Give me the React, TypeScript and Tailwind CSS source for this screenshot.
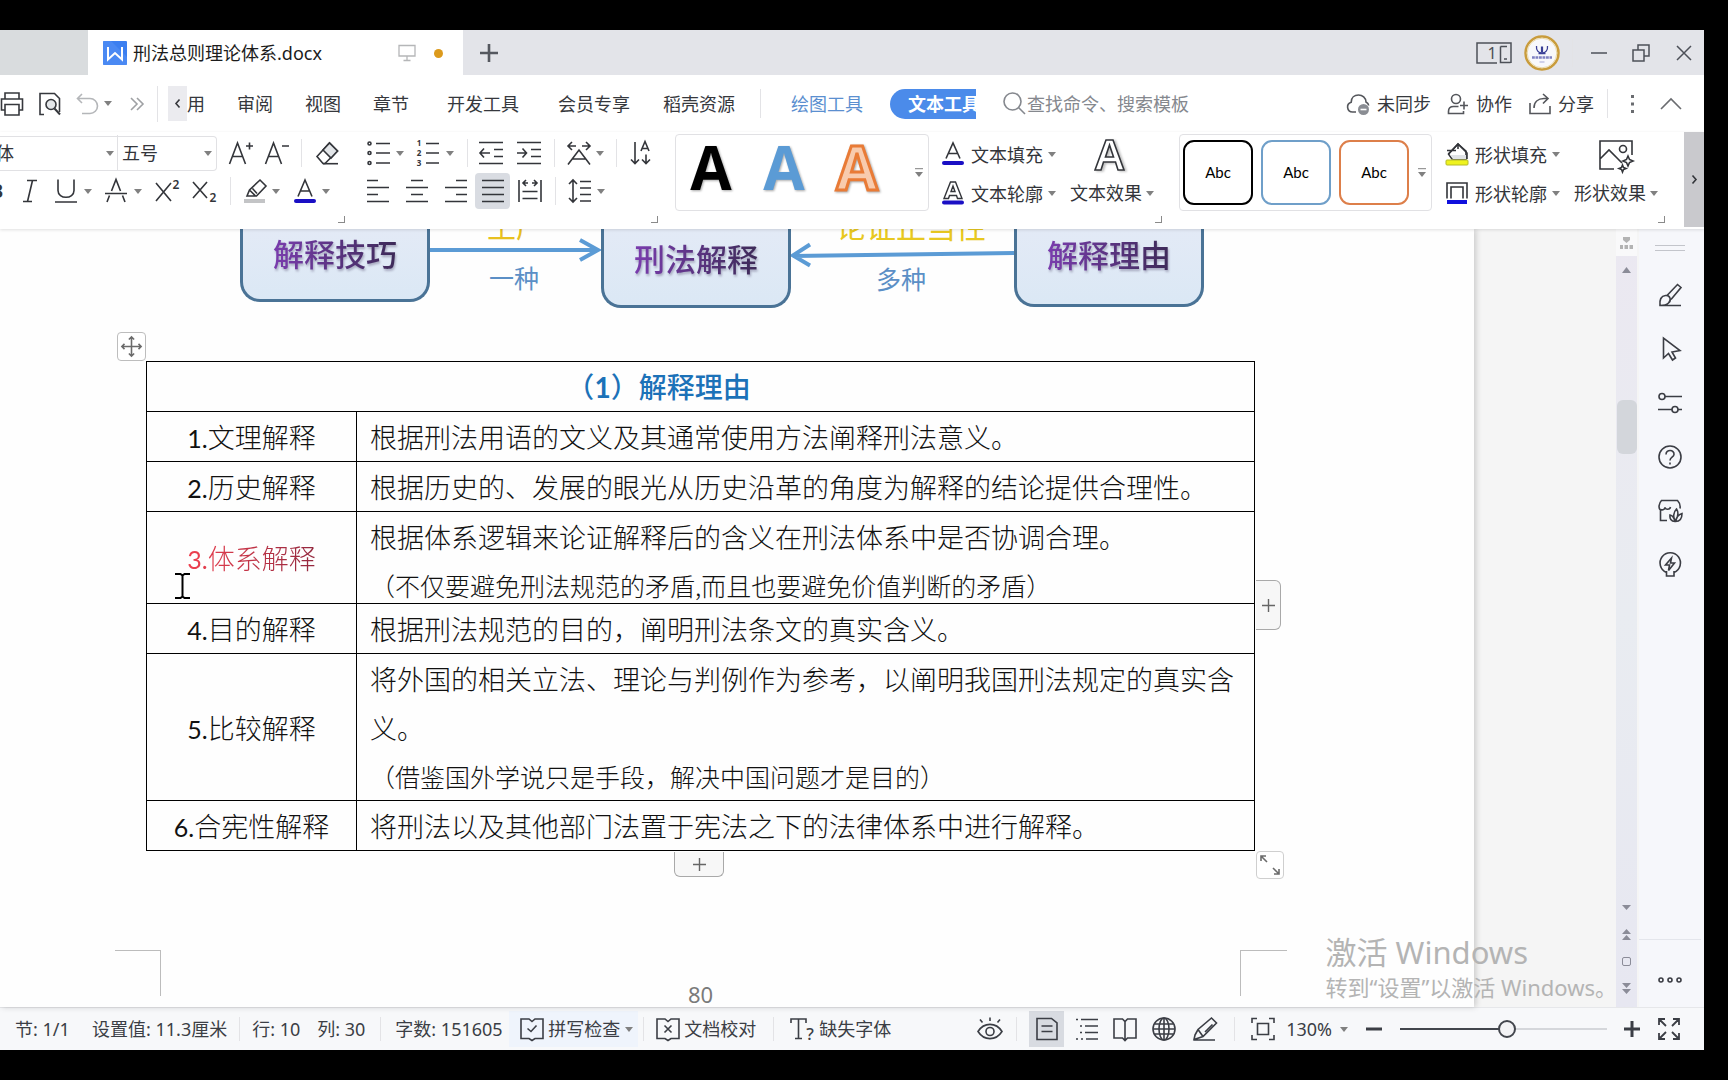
import React from "react";

type Kids = { children: React.ReactNode };

const UI = "font-['Noto_Sans','Noto_Sans_CJK_SC',sans-serif]";

function Ico({ children, className = "size-6", sw = 1.6, box = "0 0 24 24" }: Kids & { className?: string; sw?: number; box?: string }) {
  return (
    <svg viewBox={box} className={`${className} shrink-0 overflow-visible`} fill="none" stroke="currentColor" strokeWidth={sw} aria-hidden="true">
      {children}
    </svg>
  );
}

function Btn({ label, className = "", children }: Kids & { label: string; className?: string }) {
  return (
    <button type="button" aria-label={label} className={`flex shrink-0 items-center justify-center ${className}`}>
      {children}
    </button>
  );
}

function Caret({ className = "w-[18px]" }: { className?: string }) {
  return (
    <span className={`flex shrink-0 justify-center ${className}`}>
      <svg viewBox="0 0 8 5" className="h-[5px] w-2" aria-hidden="true">
        <path d="M0 0h8L4 5z" fill="#808080" />
      </svg>
    </span>
  );
}

function Sep({ className = "w-[18px]", h = "h-7" }: { className?: string; h?: string }) {
  return (
    <span className={`flex shrink-0 justify-center ${className}`}>
      <span className={`w-px bg-[#e3e3e6] ${h}`} />
    </span>
  );
}

function Corner({ className }: { className: string }) {
  return <span className={`absolute bottom-[6px] size-[7px] border-r border-b border-[#8a8a8a] ${className}`} />;
}

function Letter({ x, y, size, weight = 400, children }: { x: number; y: number; size: number; weight?: number; children: string }) {
  return (
    <text x={x} y={y} fontSize={size} fontWeight={weight} textAnchor="middle" stroke="none" fill="currentColor" fontFamily="Noto Sans, sans-serif">
      {children}
    </text>
  );
}

/* ---------------------------------------------------------------- title bar */

function TitleBar() {
  return (
    <header className="flex h-[45px] shrink-0 bg-[#e3e4e9] text-[#4d5058]">
      <div className="w-[88px] shrink-0 bg-[#d9dcde]" />
      <div className="flex w-[375px] shrink-0 items-center bg-white pt-px pl-[15px]">
        <svg viewBox="0 0 24 24" className="size-6 shrink-0" aria-hidden="true">
          <rect width="24" height="24" rx="1" fill="#3c7ff0" />
          <path d="M0 0h8L24 16v8H0z" fill="#5692f5" opacity=".55" />
          <path d="M5 6v12.500L12 12l7 6.500V6" fill="none" stroke="#fff" strokeWidth="2" />
        </svg>
        <span className="ml-[6px] text-lg text-[#1c1c1c]">刑法总则理论体系.docx</span>
        <Ico className="ml-auto size-[18px] text-[#b5b6b8]" box="0 0 18 18" sw={1.3}>
          <path d="M1 1.500h16v10.500H1zM9 12v4M5.500 16.500h7" />
        </Ico>
        <span className="mr-5 ml-[18px] size-[9px] rounded-full bg-[#dc9a1c]" />
      </div>
      <Btn label="新建" className="w-[52px]">
        <Ico className="size-[18px] text-[#55585f]" box="0 0 18 18" sw={2.6}>
          <path d="M9 0v18M0 9h18" />
        </Ico>
      </Btn>
      <div className="ml-auto flex items-center">
        <Btn label="窗口布局" className="w-9">
          <Ico className="h-[22px] w-9" box="0 0 36 22" sw={1.5}>
            <path d="M21 21H1V1h34v20M24.500 4.500V20.500h10" />
            <path d="M24.500 4.500H31M28 17h3" />
            <Letter x={16} y={17} size={16}>1</Letter>
          </Ico>
        </Btn>
        <Btn label="账户" className="ml-3 size-9">
          <svg viewBox="0 0 36 36" className="size-9" aria-hidden="true">
            <circle cx="18" cy="18" r="16.500" fill="#f8f8fb" stroke="#c99c3c" strokeWidth="2.500" />
            <circle cx="18" cy="18" r="14.800" fill="none" stroke="#ead9a8" strokeWidth="1" />
            <path d="M12.500 11c-.5 4.500 2 7 5.500 7s6-2.500 5.500-7M14.500 18.500h7" fill="none" stroke="#3a3f96" strokeWidth="1.300" />
            <path d="M18 11.500v6" stroke="#3a3f96" strokeWidth="2.200" />
            <path d="M8 22.500h20" stroke="#7f81c2" strokeWidth="2.500" strokeDasharray="2.800 .7" />
            <path d="M15.500 27h5" stroke="#b8badf" strokeWidth="1.300" />
          </svg>
        </Btn>
        <Sep className="w-6" />
        <Btn label="最小化" className="w-[29px]">
          <Ico className="size-4" box="0 0 16 16" sw={1.5}><path d="M0 8h16" /></Ico>
        </Btn>
        <Btn label="还原" className="ml-[11px] w-[34px]">
          <Ico className="size-[18px]" box="0 0 18 18" sw={1.5}>
            <path d="M1 6h11v11H1zM6 6V1h11v11h-5" />
          </Ico>
        </Btn>
        <Btn label="关闭" className="mr-[3px] ml-[9px] w-[34px]">
          <Ico className="size-4" box="0 0 16 16" sw={1.5}><path d="M1 1l14 14M15 1L1 15" /></Ico>
        </Btn>
      </div>
    </header>
  );
}

/* ----------------------------------------------------------------- menu bar */

const TABS = [
  { name: "审阅", w: "w-[68px]" },
  { name: "视图", w: "w-[68px]" },
  { name: "章节", w: "w-[68px]" },
  { name: "开发工具", w: "w-[116px]" },
  { name: "会员专享", w: "w-[106px]" },
  { name: "稻壳资源", w: "w-[104px]" },
];

function MenuBar() {
  return (
    <nav className="flex h-[57px] shrink-0 items-center bg-white text-lg text-[#36383d]">
      <Btn label="打印" className="w-6">
        <Ico>
          <path d="M5 7V1h14v6M5 18H1.500V7h21v11H19M5 12.500h14V23H5z" />
        </Ico>
      </Btn>
      <Btn label="打印预览" className="ml-[14px] w-6">
        <Ico>
          <path d="M6 22.500H2v-21h14.500l5 5V20" />
          <circle cx="13" cy="12.500" r="5" fill="#e4e7ea" />
          <path d="M16.500 16.500L22 22.500" strokeWidth="2" />
        </Ico>
      </Btn>
      <Btn label="撤销" className="ml-[13px] w-6 text-[#b4b6b9]">
        <Ico className="h-6 w-[22px]" box="0 0 22 24">
          <path d="M6 2L1.500 6.500L6 11M1.500 6.500H14a7.500 7.500 0 010 15H6" />
        </Ico>
      </Btn>
      <Caret />
      <Btn label="更多" className="ml-2 w-6 text-[#9fa1a4]">
        <Ico className="size-[14px]" box="0 0 14 14"><path d="M1 1l6 6-6 6M7 1l6 6-6 6" /></Ico>
      </Btn>
      <Sep className="w-[16px]" h="h-9" />
      <Btn label="向左滚动" className="ml-[3px] h-[35px] w-[19px] bg-[#ebebef]">
        <Ico className="h-[9px] w-[5px]" box="0 0 5 9"><path d="M4.500 .5L1 4.500l3.500 4" /></Ico>
      </Btn>
      <button type="button" className="mr-[16px] shrink-0">用</button>
      {TABS.map((t) => (
        <button key={t.name} type="button" className={`shrink-0 ${t.w}`}>{t.name}</button>
      ))}
      <Sep className="w-[18px]" h="h-[29px]" />
      <button type="button" className="ml-[22px] shrink-0 text-[#5b8fd0]">绘图工具</button>
      <div className="ml-[27px] h-[30px] w-[86px] shrink-0 overflow-hidden">
        <button type="button" className="h-[30px] w-[108px] rounded-full bg-[#4b8bea] font-bold text-white">文本工具</button>
      </div>
      <label className="ml-[27px] flex items-center text-[#85888e]">
        <Ico className="size-[23px]" box="0 0 23 23">
          <circle cx="9.500" cy="9.500" r="8.500" />
          <path d="M15.500 15.500L22 22" />
        </Ico>
        <input aria-label="搜索" placeholder="查找命令、搜索模板" className="ml-px w-[190px] bg-transparent outline-none placeholder:text-[#85888e]" />
      </label>
      <div className="ml-auto flex shrink-0 items-center">
        <button type="button" className="flex items-center gap-[7px]">
          <Ico className="size-6 text-[#54565b]">
            <path d="M10 20H6.500a5 5 0 01-1.300-9.800C5.200 5.500 8.500 3 12.500 3s7.300 2.800 7.500 7c1.500.8 2.500 2 2.700 3.500" />
            <circle cx="17.500" cy="17.500" r="5.500" fill="#8a8d93" stroke="none" />
            <path d="M14.500 17.500h6" stroke="#fff" />
          </Ico>
          未同步
        </button>
        <button type="button" className="ml-[16px] flex items-center gap-[7px]">
          <Ico className="h-6 w-[22px] text-[#54565b]" box="0 0 22 24">
            <circle cx="9" cy="7" r="4.500" />
            <path d="M16.500 19v2.500H1.500v-2c0-3 2-5 5-5h5M17 9.500v8M13 13.500h8" />
          </Ico>
          协作
        </button>
        <button type="button" className="ml-[17px] flex items-center gap-[7px]">
          <Ico className="size-[22px] text-[#54565b]" box="0 0 22 22">
            <path d="M1 10v10.500h20V13M5 15c0-6 4-9.500 10-9.500h4M14 1l5 4.500-5 5" />
          </Ico>
          分享
        </button>
        <Sep className="ml-[3px] w-5" h="h-[29px]" />
        <Btn label="更多选项" className="ml-[5px] w-[22px]">
          <svg viewBox="0 0 4 18" className="h-[18px] w-1" aria-hidden="true">
            <path d="M0 0h3v3H0zM0 7.500h3v3H0zM0 15h3v3H0z" fill="#6a6c70" />
          </svg>
        </Btn>
        <Btn label="收起功能区" className="mr-[22px] ml-4 w-[22px]">
          <Ico className="h-3 w-[22px] text-[#6a6c70]" box="0 0 22 12"><path d="M1 11L11 1l10 10" /></Ico>
        </Btn>
      </div>
    </nav>
  );
}

/* ------------------------------------------------------------------- ribbon */

function FontGroup() {
  return (
    <section className="relative h-full w-[352px] shrink-0 pt-[2px]">
      <div className="flex h-[38px] items-center">
        <div className="flex h-[35px] w-[217px] shrink-0 items-center rounded-r-sm border-y border-r border-[#e1e1e4]">
          <div className="flex w-[118px] shrink-0 items-center overflow-hidden border-r border-[#e1e1e4] py-1">
            <select aria-label="字体" className="-ml-[22px] w-[124px] shrink-0 appearance-none text-lg">
              <option>宋体</option>
            </select>
            <Caret className="w-4" />
          </div>
          <select aria-label="字号" className="ml-1 w-[78px] shrink-0 appearance-none text-lg">
            <option>五号</option>
          </select>
          <Caret className="w-4" />
        </div>
        <Btn label="增大字号" className="ml-[11px] w-[26px]">
          <Ico className="h-6 w-[26px]" box="0 0 26 24">
            <path d="M1.500 23L9.500 2l8 21M4.500 15.500h10M18 5h7M21.500 1.500v7" />
          </Ico>
        </Btn>
        <Btn label="减小字号" className="ml-[10px] w-[26px]">
          <Ico className="h-6 w-[26px]" box="0 0 26 24">
            <path d="M1.500 23L9.500 2l8 21M4.500 15.500h10M18 5h7" />
          </Ico>
        </Btn>
        <Sep className="w-[22px]" />
        <Btn label="清除格式" className="w-[30px]">
          <Ico>
            <path d="M2 15.500L14.500 2l8 8L10 22.500H8z" />
            <path d="M8 9l8 8 6.500-7-8-8z" fill="#e3e6e9" />
            <path d="M8 22.700h15" />
          </Ico>
        </Btn>
      </div>
      <div className="flex h-[38px] items-center">
        <div className="w-[3px] shrink-0 overflow-hidden">
          <button type="button" aria-label="加粗" className="-ml-[10px] text-xl font-bold">B</button>
        </div>
        <Btn label="倾斜" className="ml-[15px] w-6">
          <Ico><path d="M9 1.500h10M5 22.500h9M14.500 1.500l-5 21" /></Ico>
        </Btn>
        <Btn label="下划线" className="ml-3 w-6">
          <Ico><path d="M4 .5v11c0 9 16 9 16 0V.5M1 23h22" /></Ico>
        </Btn>
        <Caret className="w-5" />
        <Btn label="删除线" className="ml-[6px] w-6">
          <Ico><path d="M7.500 12L12 .500l4.500 11.500M1 14.500h22M5.500 16.500L3 23M18.500 16.500L21 23" /></Ico>
        </Btn>
        <Caret className="w-5" />
        <Btn label="上标" className="ml-[7px] w-[26px]">
          <Ico className="h-6 w-[26px]" box="0 0 26 24">
            <path d="M1 4l15 18M16 4L1 22" />
            <Letter x={21} y={10} size={12} weight={600}>2</Letter>
          </Ico>
        </Btn>
        <Btn label="下标" className="ml-[11px] w-[26px]">
          <Ico className="h-6 w-[26px]" box="0 0 26 24">
            <path d="M1 3l14 16M15 3L1 19" />
            <Letter x={21} y={23} size={12} weight={600}>2</Letter>
          </Ico>
        </Btn>
        <Sep className="w-6" />
        <Btn label="突出显示" className="w-[26px]">
          <Ico className="h-6 w-[26px]" box="0 0 26 24">
            <path d="M5 17l2.500-6L18 1l6 6-9.500 10zM7.500 11l6 6M10.500 9.500l4.500 5" />
            <path d="M2 22h21" stroke="#c3c4c6" strokeWidth="4" />
          </Ico>
        </Btn>
        <Caret className="w-[16px]" />
        <Btn label="字体颜色" className="ml-[10px] w-[22px]">
          <Ico className="h-6 w-[22px]" box="0 0 22 24">
            <path d="M4 17.500L11 1l7 16.500M6.500 12h9" />
            <path d="M2 22h18" stroke="#1a0fc4" strokeWidth="4" strokeLinecap="round" />
          </Ico>
        </Btn>
        <Caret className="w-5" />
      </div>
      <Corner className="right-[7px]" />
    </section>
  );
}

function ParagraphGroup() {
  return (
    <section className="relative h-full w-[323px] shrink-0 pt-[2px]">
      <div className="flex h-[38px] items-center">
        <Btn label="项目符号" className="ml-[15px] w-6">
          <Ico>
            <path d="M9 2.500h14M9 12h14M9 22h14" />
            <circle cx="2.500" cy="2.500" r="1.500" /><circle cx="2.500" cy="12" r="1.500" /><circle cx="2.500" cy="22" r="1.500" />
          </Ico>
        </Btn>
        <Caret />
        <Btn label="编号" className="ml-[7px] w-6">
          <Ico>
            <path d="M10 2.500h13M10 12h13M10 22h13" />
            <Letter x={3} y={5} size={8} weight={700}>1</Letter>
            <Letter x={3} y={15} size={8} weight={700}>2</Letter>
            <Letter x={3} y={25} size={8} weight={700}>3</Letter>
          </Ico>
        </Btn>
        <Caret className="w-5" />
        <Sep className="w-[14px]" />
        <Btn label="减少缩进" className="ml-[5px] w-6">
          <Ico><path d="M0 1.500h24M0 22.500h24M15 8.500h9M15 15.500h9M11 12H1.500M5 7.500L1 12l4 4.500" /></Ico>
        </Btn>
        <Btn label="增加缩进" className="ml-[14px] w-6">
          <Ico><path d="M0 1.500h24M0 22.500h24M14 8.500h10M14 15.500h10M0 12h9M5.500 7.500l4 4.500-4 4.500" /></Ico>
        </Btn>
        <Sep className="w-[26px]" />
        <Btn label="文字方向" className="w-6">
          <Ico><path d="M1 5h8M5 1L1 5l4 4M15 5h8M19 1l4 4-4 4M1 23.500L12 9l11 14.500M5.500 18h13" /></Ico>
        </Btn>
        <Caret />
        <Sep className="w-[14px]" />
        <Btn label="排序" className="ml-[6px] w-6">
          <Ico>
            <path d="M6 1v21.500M2 18.500l4 4 4-4M12 10l4-9.500 4 9.500M13.500 7.500h5M17 13.500v9M13 18.500l4 4 4-4" />
          </Ico>
        </Btn>
      </div>
      <div className="flex h-[38px] items-center">
        <Btn label="左对齐" className="ml-[14px] w-6">
          <Ico><path d="M1 1.500h11M1 8.500h22M1 15.500h11M1 22.500h22" /></Ico>
        </Btn>
        <Btn label="居中对齐" className="ml-[15px] w-6">
          <Ico><path d="M6 1.500h12M1 8.500h22M6 15.500h12M1 22.500h22" /></Ico>
        </Btn>
        <Btn label="右对齐" className="ml-[15px] w-6">
          <Ico><path d="M12 1.500h11M1 8.500h22M12 15.500h11M1 22.500h22" /></Ico>
        </Btn>
        <Btn label="两端对齐" className="ml-[7px] h-9 w-[35px] rounded-sm bg-[#d9dce2]">
          <Ico><path d="M1 1.500h22M1 8.500h22M1 15.500h22M1 22.500h22" /></Ico>
        </Btn>
        <Btn label="分散对齐" className="ml-[8px] w-6">
          <Ico><path d="M1 1v22M23 1v22M5 4h5M8 1L5 4l3 3M14 4h5M16 1l3 3-3 3M4.500 12.500h15M4.500 19.500h15" /></Ico>
        </Btn>
        <Sep className="w-[26px]" />
        <Btn label="行距" className="w-6">
          <Ico><path d="M5 1v22M1 5l4-4 4 4M1 19l4 4 4-4M12 2.500h11M12 9h11M12 15.500h11M12 22h11" /></Ico>
        </Btn>
        <Caret />
      </div>
      <Corner className="right-[17px]" />
    </section>
  );
}

function MoreCaret() {
  return (
    <svg viewBox="0 0 8 9" className="h-[9px] w-2" aria-hidden="true">
      <path d="M0 4h8L4 9z" fill="#808080" />
      <path d="M0 .7h8" stroke="#808080" />
    </svg>
  );
}

function WordArtGallery() {
  const art = [
    { fill: "#000000", stroke: "none" },
    { fill: "#5b9bd5", stroke: "none" },
    { fill: "#f8cbad", stroke: "#e97b36" },
  ];
  return (
    <section className="mt-[2px] flex h-[77px] w-[254px] shrink-0 items-center rounded-sm border border-[#e1e1e4]">
      {art.map((a, i) => (
        <button key={a.fill} type="button" aria-label={`艺术字样式 ${i + 1}`} className="h-full w-[73px] shrink-0">
          <svg viewBox="0 0 73 75" className="size-full drop-shadow-[1px_1px_1px_rgba(0,0,0,0.35)]" aria-hidden="true">
            <text x="35" y="55" fontSize="60" fontWeight="700" textAnchor="middle" fill={a.fill} stroke={a.stroke} strokeWidth="3" fontFamily="Open Sans, sans-serif">A</text>
          </svg>
        </button>
      ))}
      <Btn label="更多艺术字" className="ml-[16px] w-4"><MoreCaret /></Btn>
    </section>
  );
}

function TextGroup() {
  return (
    <section className="relative flex h-full w-[250px] shrink-0 pt-[3px] text-lg">
      <div className="ml-[13px] flex w-[120px] shrink-0 flex-col">
        <button type="button" className="flex h-[39px] items-center">
          <Ico className="h-6 w-[22px]" box="0 0 22 24">
            <path d="M4 15.500L11 0l7 15.500M6.500 10.500h9" />
            <path d="M2 20h18" stroke="#1a0fc4" strokeWidth="4" strokeLinecap="round" />
          </Ico>
          <span className="ml-[7px] shrink-0">文本填充</span>
          <Caret />
        </button>
        <button type="button" className="flex h-[39px] items-center">
          <Ico className="h-6 w-[22px]" box="0 0 22 24" sw={1.4}>
            <path d="M2 16.500L8.500 0h5L20 16.500h-4.500l-1-3h-7l-1 3zM9 9.500h4L11 4z" />
            <path d="M2 20.500h18" stroke="#1a0fc4" strokeWidth="4" strokeLinecap="round" />
          </Ico>
          <span className="ml-[7px] shrink-0">文本轮廓</span>
          <Caret />
        </button>
      </div>
      <button type="button" className="ml-[8px] flex h-[77px] w-[92px] shrink-0 flex-col justify-between">
        <Ico className="mt-[3px] ml-[23px] h-[34px] w-[34px] drop-shadow-[2px_1px_1px_rgba(0,0,0,0.25)]" box="0 0 34 34">
          <path d="M2 32L13 2h7l11 30h-6l-2.500-8h-12L8 32zM12.500 19h8L16.500 7z" fill="#fff" />
        </Ico>
        <span className="flex h-[38px] items-center"><span className="shrink-0">文本效果</span><Caret className="w-[16px]" /></span>
      </button>
      <Corner className="right-[17px]" />
    </section>
  );
}

function ShapeGallery() {
  const shapes = [
    { key: "black", c: "border-black" },
    { key: "blue", c: "border-[#6f9fc9]" },
    { key: "orange", c: "border-[#dd7f4a]" },
  ];
  return (
    <section className="mt-[2px] flex h-[77px] w-[253px] shrink-0 items-center gap-2 rounded-sm border border-[#e1e1e4] pl-[3px]">
      {shapes.map((s) => (
        <button key={s.key} type="button" className={`h-[65px] w-[70px] shrink-0 rounded-[11px] border-2 bg-white font-['Lato',sans-serif] text-[15px] text-black ${s.c}`}>Abc</button>
      ))}
      <Btn label="更多形状样式" className="-ml-[3px] w-4"><MoreCaret /></Btn>
    </section>
  );
}

function ShapeGroup() {
  return (
    <section className="relative flex h-full min-w-[252px] flex-1 pt-[3px] text-lg">
      <div className="ml-[13px] flex w-[121px] shrink-0 flex-col">
        <button type="button" className="flex h-[39px] items-center">
          <Ico>
            <path d="M3.500 11L13 1l8 7v8H7z" fill="#fff" />
            <path d="M5 12h16v4H8z" fill="#e0e3e6" stroke="none" />
            <path d="M2 7.500h9M13 1v5M3.500 11L13 1l9 9v6" />
            <rect x="1" y="17" width="22" height="5" rx="1" fill="#eff31e" stroke="#b5ba28" strokeWidth="1" />
          </Ico>
          <span className="ml-[6px] shrink-0">形状填充</span>
          <Caret />
        </button>
        <button type="button" className="flex h-[39px] items-center">
          <Ico>
            <path d="M2 16.500V1h20v15.500M6 16.500V5h12v11.500" />
            <path d="M2 20h20" stroke="#1010dd" strokeWidth="4" />
          </Ico>
          <span className="ml-[6px] shrink-0">形状轮廓</span>
          <Caret />
        </button>
      </div>
      <button type="button" className="ml-[8px] flex h-[77px] w-[92px] shrink-0 flex-col justify-between">
        <Ico className="mt-[4px] ml-[24px] h-[34px] w-[36px]" box="0 0 36 34">
          <path d="M16 30H2V2h32v14M2 20l9-9 13 13" />
          <circle cx="25" cy="10" r="3.500" />
          <path d="M30 17l1.500 3.500L35 22l-3.500 1.500L30 27l-1.500-3.500L25 22l3.500-1.500zM24.500 26l1 2.500 2.500 1-2.500 1-1 2.500-1-2.500-2.500-1 2.500-1z" />
        </Ico>
        <span className="flex h-[38px] items-center"><span className="shrink-0">形状效果</span><Caret className="w-[16px]" /></span>
      </button>
      <Corner className="right-[19px]" />
    </section>
  );
}

function Ribbon() {
  return (
    <div className="relative z-10 flex h-[97px] shrink-0 bg-white text-[#33353a] shadow-[0_1px_3px_rgba(0,0,0,0.12)]">
      <FontGroup />
      <ParagraphGroup />
      <WordArtGallery />
      <TextGroup />
      <ShapeGallery />
      <ShapeGroup />
      <Btn label="向右滚动" className="h-[95px] w-5 bg-[#c9c9cd]">
        <Ico className="h-[9px] w-[5px]" box="0 0 5 9"><path d="M.5 .5L4 4.500l-3.500 4" /></Ico>
      </Btn>
    </div>
  );
}

/* ----------------------------------------------------------------- document */

const NODES = [
  { text: "解释技巧", pos: "left-[240px] h-[73px] pb-[26px]" },
  { text: "刑法解释", pos: "left-[601px] h-[79px] pb-[27px]" },
  { text: "解释理由", pos: "left-[1014px] h-[78px] pb-[30px]" },
];

function Diagram() {
  return (
    <div className="relative h-[132px] font-['Noto_Sans_CJK_SC',sans-serif]">
      <svg className="absolute top-0 left-0 h-[90px] w-[1240px]" viewBox="0 0 1240 90" fill="none" stroke="#5b9bd5" strokeWidth="4" aria-hidden="true">
        <path d="M429 21H598M580 11l18 10-18 10M1014 24L793 27M810 15.500L793 26.500l17 10" />
      </svg>
      {NODES.map((n) => (
        <div key={n.text} className={`absolute top-0 flex w-[190px] items-end justify-center rounded-b-[20px] border-[3px] border-t-0 border-[#4a7396] bg-linear-to-b from-[#e3eaf6] to-[#dbe8f5] ${n.pos}`}>
          <span className="bg-linear-to-r from-[#7a3cae] to-[#3d2a58] bg-clip-text text-[31px] leading-[40px] font-medium text-transparent drop-shadow-[1px_2px_1px_rgba(60,50,90,0.35)]">{n.text}</span>
        </div>
      ))}
      <span className="absolute -top-[24px] left-[487px] text-[29px] leading-[40px] text-[#e8c020]">生产</span>
      <span className="absolute -top-[24px] left-[836px] text-[30px] leading-[40px] text-[#e8c820]">论证正当性</span>
      <span className="absolute top-[30px] left-[489px] text-[25px] leading-[36px] text-[#5b8fc6]">一种</span>
      <span className="absolute top-[31px] left-[876px] text-[25px] leading-[36px] text-[#5b8fc6]">多种</span>
    </div>
  );
}

type Row = { no: string; name: string; body: string; note?: string; noteStyle?: string; red?: boolean };

const ROWS: Row[] = [
  { no: "1.", name: "文理解释", body: "根据刑法用语的文义及其通常使用方法阐释刑法意义。" },
  { no: "2.", name: "历史解释", body: "根据历史的、发展的眼光从历史沿革的角度为解释的结论提供合理性。" },
  { no: "3.", name: "体系解释", body: "根据体系逻辑来论证解释后的含义在刑法体系中是否协调合理。", note: "（不仅要避免刑法规范的矛盾,而且也要避免价值判断的矛盾）", noteStyle: "-mb-[7px]", red: true },
  { no: "4.", name: "目的解释", body: "根据刑法规范的目的，阐明刑法条文的真实含义。" },
  { no: "5.", name: "比较解释", body: "将外国的相关立法、理论与判例作为参考，以阐明我国刑法规定的真实含义。", note: "（借鉴国外学说只是手段，解决中国问题才是目的）", noteStyle: "-mb-px" },
  { no: "6.", name: "合宪性解释", body: "将刑法以及其他部门法置于宪法之下的法律体系中进行解释。" },
];

function ReasonTable() {
  return (
    <div className="relative mr-[219px] ml-[146px]">
      <table className="w-full table-fixed border-collapse font-['Noto_Sans_CJK_SC',sans-serif] text-[27px] leading-[49px] font-light text-[#111]">
        <colgroup>
          <col className="w-[210px]" />
          <col />
        </colgroup>
        <thead>
          <tr>
            <th colSpan={2} className="border border-black pr-[84px] text-[28px] font-medium text-[#1c72b8]">
              （<b className="font-['Lato',sans-serif] text-[28px] leading-none">1</b>）解释理由
            </th>
          </tr>
        </thead>
        <tbody>
          {ROWS.map((r) => (
            <tr key={r.no}>
              <th scope="row" className="border border-black font-light">
                <span className={r.red ? "bg-linear-to-r from-[#f0404f] to-[#93283e] bg-clip-text text-transparent" : ""}>
                  <span className="font-['Lato',sans-serif] text-[25px] leading-none font-normal">{r.no}</span>
                  {r.name}
                </span>
              </th>
              <td className="border border-black pl-[13px]">
                <p>{r.body}</p>
                {r.note && <p className={`text-[25px] ${r.noteStyle ?? ""}`}>{r.note}</p>}
              </td>
            </tr>
          ))}
        </tbody>
      </table>
      <Btn label="移动表格" className="absolute -top-[29px] -left-[29px] size-[29px] rounded-sm border border-[#bdbdbd] bg-white text-[#6b6b6b]">
        <Ico className="size-[21px]" sw={1.8}>
          <path d="M12 1v22M1 12h22M9 4l3-3 3 3M9 20l3 3 3-3M4 9l-3 3 3 3M20 9l3 3-3 3" />
        </Ico>
      </Btn>
      <Btn label="添加列" className="absolute top-[219px] -right-[26px] h-[50px] w-[25px] rounded-r-md border border-l-0 border-[#a9a9a9] bg-[#f7f7f7] text-[#666]">
        <Ico className="size-[13px]" box="0 0 13 13" sw={1.4}><path d="M6.500 0v13M0 6.500h13" /></Ico>
      </Btn>
      <Btn label="添加行" className="absolute -bottom-[26px] left-[528px] h-[25px] w-[50px] rounded-b-md border border-t-0 border-[#a9a9a9] bg-[#f7f7f7] text-[#666]">
        <Ico className="size-[13px]" box="0 0 13 13" sw={1.4}><path d="M6.500 0v13M0 6.500h13" /></Ico>
      </Btn>
      <Btn label="调整表格大小" className="absolute -right-[29px] -bottom-[28px] h-[28px] w-[28px] rounded-sm border border-[#cfcfcf] bg-white text-[#6b6b6b]">
        <Ico className="size-5" box="0 0 20 20" sw={1.6}>
          <path d="M1 6V1h5M1 1l6 6M19 14v5h-5M19 19l-6-6" />
        </Ico>
      </Btn>
      <svg viewBox="0 0 15 26" className="absolute top-[212px] left-[29px] h-[26px] w-[15px]" fill="none" stroke="#000" strokeWidth="2" aria-hidden="true">
        <path d="M0 1h5.500l2 1.500 2-1.500H15M0 25h5.500l2-1.500 2 1.500H15M7.500 2.500v21" />
      </svg>
    </div>
  );
}

function Page() {
  return (
    <main className="relative flex min-w-0 flex-1 flex-col overflow-hidden bg-[#fefefe] shadow-[2px_0_6px_rgba(0,0,0,0.18)]">
      <Diagram />
      <ReasonTable />
      <div className="mt-auto mr-[187px] mb-[11px] ml-[115px] flex h-[46px] shrink-0 justify-between">
        <span className="w-[46px] border-t border-r border-[#bcbcbc]" />
        <span className="mt-[32px] text-[22px] leading-[24px] text-[#7a7a7a]">80</span>
        <span className="w-[47px] border-t border-l border-[#bcbcbc]" />
      </div>
    </main>
  );
}

function Tri({ d, h = "h-2", box = "0 0 9 6" }: { d: string; h?: string; box?: string }) {
  return (
    <svg viewBox={box} className={`${h} w-[9px]`} fill="#8b8c98" aria-hidden="true"><path d={d} /></svg>
  );
}

function ScrollColumn() {
  return (
    <div className="flex w-[21px] shrink-0 flex-col items-center bg-linear-to-b from-[#ebe8f1] via-[#e9ecf1] to-[#e7e7f1]">
      <Btn label="标尺" className="h-[27px] w-full bg-[#f9f9fa]">
        <svg viewBox="0 0 13 12" className="h-3 w-[13px]" fill="#b3b3b3" aria-hidden="true">
          <path d="M3 0h7v3L6.500 6 3 3zM0 8h3v4H0zM4.500 8h3.500v4H4.500zM9.500 8H13v4H9.500z" />
        </svg>
      </Btn>
      <Btn label="向上滚动" className="h-[27px] w-full"><Tri d="M0 6l4.500-6L9 6z" h="h-[6px]" /></Btn>
      <div className="mt-[117px] h-[54px] w-5 rounded-md bg-[#d3d6db]" />
      <Btn label="向下滚动" className="mt-auto h-[26px] w-full"><Tri d="M0 0h9L4.500 5z" h="h-[6px]" /></Btn>
      <Btn label="上一页" className="h-[27px] w-full"><Tri d="M0 5l4.500-5L9 5zM0 11l4.500-5L9 11z" h="h-[11px]" box="0 0 9 11" /></Btn>
      <Btn label="选择浏览对象" className="h-[27px] w-full"><span className="h-[9px] w-[9px] rounded-xs border border-[#8b8c98]" /></Btn>
      <Btn label="下一页" className="mb-[5px] h-[27px] w-full"><Tri d="M0 0h9L4.500 5zM0 6h9L4.500 11z" h="h-[11px]" box="0 0 9 11" /></Btn>
    </div>
  );
}

function SideBar() {
  const tools = [
    { label: "样式", d: <><path d="M9 12.500L19.500 1.500l3.500 3L13 16.500" /><path d="M2 22.500c-.5-5 .5-9.500 5.500-10s6 5 3 7.500c-1.500 1.500-4 2.500-8.500 2.500zM10 12.500l2.500 3M2 22.500h21" /></> },
    { label: "选择", d: <path d="M5.500 1v20l5-4.500 4 6.500 3-2-3.500-6 8-1.500z" /> },
    { label: "属性", d: <><circle cx="4" cy="5.500" r="3" /><path d="M7 5.500h17M0 18.500h14M20 18.500h4" /><circle cx="17" cy="18.500" r="3" /></> },
    { label: "帮助", d: <><circle cx="12" cy="12" r="11" /><path d="M8 9.500c0-5.500 8.500-5 8 0-.3 2.800-4 2.800-4 6" /><path d="M12 17.500v2" /></> },
    { label: "素材库", d: <><path d="M2.500 11v10.500H9M2.500 11C0 9.500 1 4 3.500 1.500h16c2 2 3 5 2.500 8M2.500 10.500c2.500 1 4 0 4.500-2 .5 2.500 5 2.500 5.500-.5" /><path d="M17.500 22c-3-3.500-2-9 1-12 2 3 2 7-1 12zM17 22.500c-4 0-5.500-3-5-6.500 3 .5 4 2.500 5 6.500zM17.500 22.500c4.500 0 6.500-3.500 6.500-8-3.500 1-5.500 3-6.500 8z" /></> },
    { label: "智能助手", d: <><path d="M8.500 19.500A10.200 10.200 0 1116 19.500M8.500 18v5h7.500v-5" /><path d="M13.500 5l-6 7h4l-1 5.500 6-7.500h-4z" /></> },
  ];
  return (
    <aside className="ml-[2px] flex w-[65px] shrink-0 flex-col items-center bg-[#f6f7fb] pr-[3px] text-[#3b3d44]">
      <div className="mt-[16px] mb-[17px] h-[6px] w-[30px] shrink-0 border-y border-[#c3c5cb]" />
      {tools.map((t) => (
        <Btn key={t.label} label={t.label} className="h-[54px] w-full"><Ico>{t.d}</Ico></Btn>
      ))}
      <div className="mt-auto flex h-[68px] w-full shrink-0 items-center justify-center border-t border-[#e4e6ec] pt-[13px]">
        <Btn label="更多工具" className="w-6">
          <Ico className="h-[6px] w-6" box="0 0 24 6">
            <circle cx="3" cy="3" r="2" /><circle cx="12" cy="3" r="2" /><circle cx="21" cy="3" r="2" />
          </Ico>
        </Btn>
      </div>
    </aside>
  );
}

/* --------------------------------------------------------------- status bar */

function BookIcon({ mark }: { mark: string }) {
  return (
    <Ico>
      <path d="M9 2H1v19.500h8l3 2 3-2h8V2h-8l-3 2.500z" />
      <path d={mark} />
    </Ico>
  );
}

function StatusBar() {
  return (
    <footer className="flex h-[43px] shrink-0 items-center border-t border-[#e6e7ea] bg-[#f7f8fa] text-lg whitespace-nowrap text-[#3b3e45]">
      <span className="ml-[15px] w-[77px] shrink-0">节: 1/1</span>
      <span className="shrink-0">设置值: 11.3厘米</span>
      <Sep className="w-[25px]" h="h-6" />
      <span className="w-[65px] shrink-0">行: 10</span>
      <span className="shrink-0">列: 30</span>
      <Sep className="w-[30px]" h="h-6" />
      <span className="w-[114px] shrink-0">字数: 151605</span>
      <button type="button" className="flex h-9 shrink-0 items-center bg-[#eff4fc] pl-[11px]">
        <BookIcon mark="M7.500 11.500l3.500 3 5.500-6" />
        <span className="ml-1">拼写检查</span>
        <Caret />
      </button>
      <Sep className="w-[10px]" h="h-6" />
      <button type="button" className="ml-2 flex shrink-0 items-center">
        <BookIcon mark="M8.500 8.500l7 7M15.500 8.500l-7 7" />
        <span className="ml-1">文档校对</span>
      </button>
      <Sep className="w-[34px]" h="h-6" />
      <button type="button" className="flex shrink-0 items-center">
        <Ico className="h-6 w-[26px]" box="0 0 26 24">
          <path d="M1 6V2h15v4M8.500 2v19.500M5 21.500h7" />
          <Letter x={20} y={23} size={17} weight={500}>?</Letter>
        </Ico>
        <span className="ml-[3px]">缺失字体</span>
      </button>
      <div className="ml-auto flex shrink-0 items-center">
        <Btn label="护眼模式" className="w-[26px]">
          <Ico className="h-6 w-[26px]" box="0 0 26 24">
            <path d="M1 14.500c6-9.500 18-9.500 24 0-6 9.500-18 9.500-24 0zM13 .5V4M3 2.500l2.500 3M23 2.500l-2.500 3" />
            <circle cx="13" cy="14.500" r="4" />
          </Ico>
        </Btn>
        <Sep className="w-[26px]" h="h-6" />
        <Btn label="页面视图" className="h-9 w-[35px] bg-[#d8dbe1]">
          <Ico><path d="M2 1.500h14.500L22 6v16.500H2zM6.500 9h11M6.500 14.500h11" /></Ico>
        </Btn>
        <Btn label="大纲" className="ml-[12px] w-[22px]">
          <Ico className="h-6 w-[22px]" box="0 0 22 24">
            <path d="M0 2.500h2M5 2.500h17M4 9h2M9 9h13M4 15.500h2M9 15.500h13M0 22h2M5 22h2M10 22h12" />
          </Ico>
        </Btn>
        <Btn label="阅读版式" className="ml-[15px] w-6">
          <Ico><path d="M9.500 2H1v19h8.500l2.500 2.500 2.500-2.500H23V2h-8.500L12 4.500zM12 4.500v19" /></Ico>
        </Btn>
        <Btn label="Web 版式" className="ml-[15px] w-6">
          <Ico>
            <circle cx="12" cy="12" r="11" />
            <ellipse cx="12" cy="12" rx="5" ry="11" />
            <path d="M12 1v22M2.500 7h19M2.500 17h19M1 12h22" />
          </Ico>
        </Btn>
        <Btn label="书写模式" className="ml-[17px] w-6">
          <Ico><path d="M2 18l3-5.500L18.500 1l5 5L10 19.500 1 22.500zM5 12.500l5 7M19.500 7.500L12 15M1 23h21" /></Ico>
        </Btn>
        <Sep className="w-[34px]" h="h-6" />
        <Btn label="最佳显示比例" className="w-6">
          <Ico><path d="M1 6V1.500h5M18 1.500h5V6M23 18v4.500h-5M6 22.500H1V18M6.500 6.500h11v11h-11z" /></Ico>
        </Btn>
        <button type="button" className="ml-[11px] flex items-center">130%<Caret className="ml-1 w-[16px]" /></button>
        <Btn label="缩小" className="ml-[13px] w-[18px]">
          <Ico className="size-4" box="0 0 16 16" sw={3}><path d="M0 8h16" /></Ico>
        </Btn>
        <input
          type="range"
          aria-label="显示比例"
          defaultValue={52}
          className="mx-[17px] h-5 w-[207px] appearance-none bg-transparent [&::-webkit-slider-runnable-track]:h-[2px] [&::-webkit-slider-runnable-track]:bg-[linear-gradient(to_right,#43464d_52%,#d5d7db_52%)] [&::-webkit-slider-thumb]:-mt-[8px] [&::-webkit-slider-thumb]:size-[18px] [&::-webkit-slider-thumb]:appearance-none [&::-webkit-slider-thumb]:rounded-full [&::-webkit-slider-thumb]:border-2 [&::-webkit-slider-thumb]:border-solid [&::-webkit-slider-thumb]:border-[#43464d] [&::-webkit-slider-thumb]:bg-[#f3f3f5]"
        />
        <Btn label="放大" className="w-4">
          <Ico className="size-4" box="0 0 16 16" sw={3}><path d="M0 8h16M8 0v16" /></Ico>
        </Btn>
        <Btn label="全屏显示" className="mr-[23px] ml-[17px] w-6">
          <Ico className="size-6" sw={1.8}>
            <path d="M2 8V2h6M2 2l7 7M16 2h6v6M22 2l-7 7M22 16v6h-6M22 22l-7-7M8 22H2v-6M2 22l7-7" />
          </Ico>
        </Btn>
      </div>
    </footer>
  );
}

export default function App() {
  return (
    <div className="h-screen bg-black py-[30px] pr-[24px]">
      <div className={`flex h-full flex-col overflow-hidden bg-white ${UI}`}>
        <TitleBar />
        <MenuBar />
        <Ribbon />
        <div className="relative flex min-h-0 flex-1 bg-[#f5f5f5]">
          <Page />
          <div className="w-[142px] shrink-0" />
          <ScrollColumn />
          <SideBar />
          <div className="pointer-events-none absolute right-[87px] bottom-[5px] whitespace-nowrap text-[#b4b4b4]">
            <p className="text-[31px] leading-[40px]">激活 Windows</p>
            <p className="text-[22px] leading-[30px]">转到“设置”以激活 Windows。</p>
          </div>
        </div>
        <StatusBar />
      </div>
    </div>
  );
}
